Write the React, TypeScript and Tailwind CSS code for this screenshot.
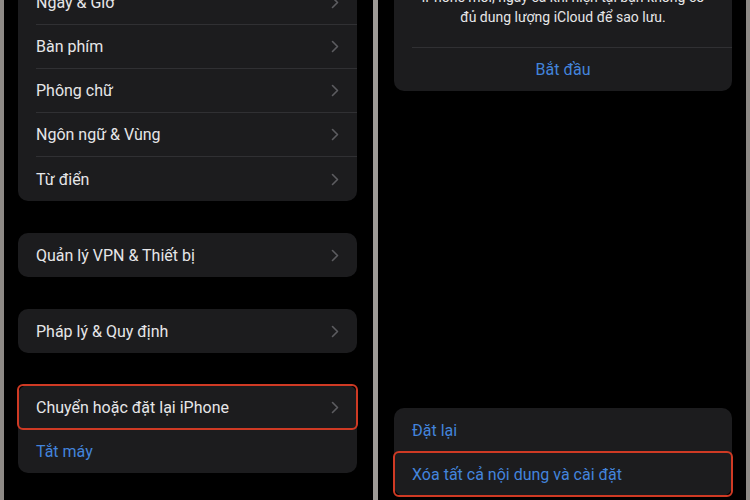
import React from 'react';

function Chevron() {
  return (
    <svg width="8" height="13" viewBox="0 0 8 13" className="shrink-0">
      <polyline points="1.5,1.5 6.5,6.5 1.5,11.5" fill="none" stroke="#5c5c60" strokeWidth="1.6" strokeLinecap="round" strokeLinejoin="round" />
    </svg>
  );
}

function Row({ label, last = false, chevron = true, blue = false }: { label: string; last?: boolean; chevron?: boolean; blue?: boolean }) {
  return (
    <div className="h-[44px] pl-[18px] flex">
      <div className={`flex-1 flex items-center justify-between pr-[18px] ${last ? '' : 'border-b border-[#303033]'}`}>
        <span className={blue ? 'text-[#4384dc]' : 'text-[#e6e6e8]'}>{label}</span>
        {chevron && <Chevron />}
      </div>
    </div>
  );
}

function Highlight() {
  return <div className="absolute inset-[-1px] rounded-[6px] border-2 border-[#cf3a24] pointer-events-none" />;
}

export default function App() {
  return (
    <div
      className="w-[750px] h-[500px] overflow-hidden flex bg-black text-[16px] leading-[21px]"
      style={{ fontFamily: 'Roboto, "Noto Sans", sans-serif' }}
    >
      <div className="w-[4px] bg-[#8e8a86]" />

      {/* left screen */}
      <div className="w-[369px] pl-[14px] pr-[16px] flex flex-col">
        <div className="mt-[-19px] rounded-[10px] bg-[#1c1c1e]">
          <Row label="Ngày & Giờ" />
          <Row label="Bàn phím" />
          <Row label="Phông chữ" />
          <Row label="Ngôn ngữ & Vùng" />
          <Row label="Từ điển" last />
        </div>
        <div className="mt-[32px] rounded-[10px] bg-[#1c1c1e]">
          <Row label="Quản lý VPN & Thiết bị" last />
        </div>
        <div className="mt-[32px] rounded-[10px] bg-[#1c1c1e]">
          <Row label="Pháp lý & Quy định" last />
        </div>
        <div className="mt-[32px] rounded-[10px] bg-[#1c1c1e]">
          <div className="relative">
            <Row label="Chuyển hoặc đặt lại iPhone" last />
            <Highlight />
          </div>
          <Row label="Tắt máy" chevron={false} blue last />
        </div>
      </div>

      <div className="w-[5px] bg-[#9e9b97]" />

      {/* right screen */}
      <div className="w-[368px] pl-[16px] pr-[14px] flex flex-col">
        <div className="mt-[-13px] rounded-[10px] bg-[#1c1c1e]">
          <div className="px-[10px] pb-[20px] text-center text-[#e6e6e8] text-[14px] leading-[20px] whitespace-nowrap">
            <p>iPhone mới, ngay cả khi hiện tại bạn không có</p>
            <p>đủ dung lượng iCloud để sao lưu.</p>
          </div>
          <div className="ml-[18px] border-t border-[#303033] h-[44px] flex items-center justify-center pr-[18px]">
            <span className="text-[#4384dc]">Bắt đầu</span>
          </div>
        </div>
        <div className="mt-[317px] rounded-[10px] bg-[#1c1c1e]">
          <Row label="Đặt lại" chevron={false} blue last />
          <div className="relative">
            <Row label="Xóa tất cả nội dung và cài đặt" chevron={false} blue last />
            <Highlight />
          </div>
        </div>
      </div>

      <div className="w-[4px] bg-[#8e8a86]" />
    </div>
  );
}
